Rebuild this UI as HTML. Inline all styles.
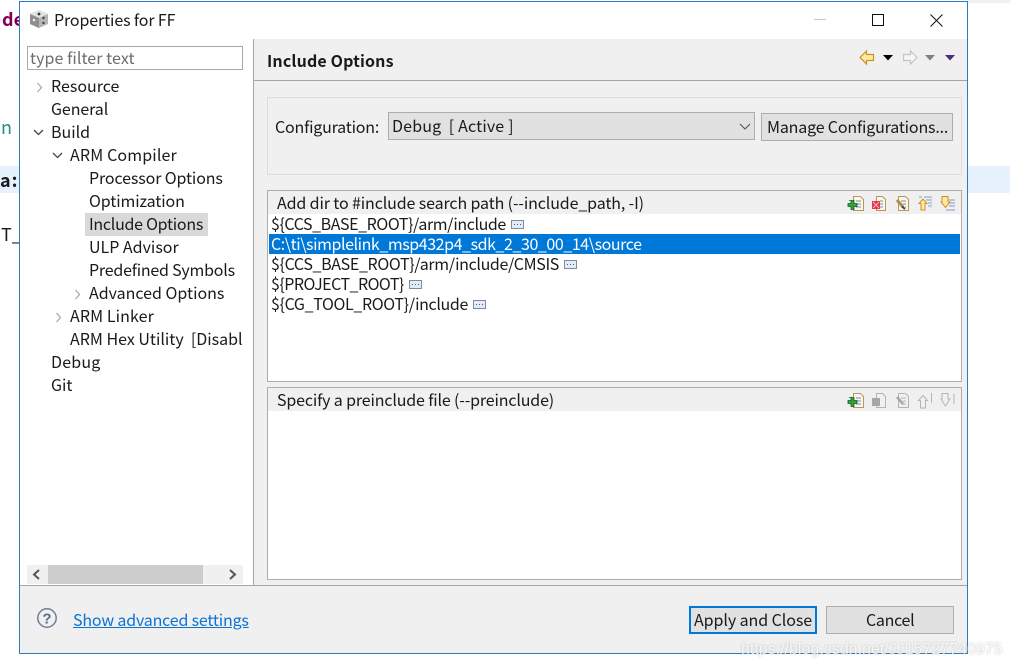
<!DOCTYPE html>
<html><head><meta charset="utf-8">
<style>
html,body{margin:0;padding:0;background:#fff;}
#p{position:relative;width:1010px;height:669px;overflow:hidden;background:#fff;font-family:"Noto Sans CJK SC","Liberation Sans",sans-serif;font-size:16px;color:#1a1a1a;}
#p div{position:absolute;box-sizing:border-box;}
.t{white-space:pre;line-height:22px;height:22px;}
svg{position:absolute;overflow:visible;}
.b{background:#e1e1e1;border:1px solid #adadad;}
.sec{background:#fff;border:1px solid #adadad;}
.hd{background:#f0f0f0;}
.dots{width:13px;height:9px;border:1px solid #7d8ba0;background:#e4ebf6;}
.dots:after{content:"";position:absolute;left:2px;top:3px;width:7px;height:1px;background:repeating-linear-gradient(90deg,#3d5a8a 0 1px,transparent 1px 3px);}
</style></head><body><div id="p">
<!-- background peeks -->
<div style="left:0;top:0;width:19px;height:669px;background:#fff"></div>
<div class="t" style="left:2px;top:8px;font-weight:700;color:#7f0055;font-size:18px">de</div>
<div class="t" style="left:1px;top:116px;color:#2a8a8a;font-size:18px">n</div>
<div style="left:0;top:166px;width:19px;height:27px;background:#e8f2fe"></div>
<div class="t" style="left:0;top:169px;font-weight:700;font-size:18px;letter-spacing:1px">a:</div>
<div class="t" style="left:1px;top:223px;font-size:18px">T_</div>
<div style="left:968px;top:166px;width:42px;height:27px;background:#e8f2fe"></div>
<div style="left:968px;top:0;width:42px;height:3px;background:#f0f0f0"></div>
<!-- dialog -->
<div style="left:19px;top:1px;width:949px;height:653px;background:#fff;border:1px solid #2b7cc4"></div>
<!-- title -->
<svg style="left:29px;top:9px" width="20" height="20" viewBox="0 0 20 20"><path d="M10 1L19 5V15L10 19L1 15V5Z" fill="#b5b5b5"/><path d="M10 1L19 5L10 9L1 5Z" fill="#e2e2e2"/><path d="M1 5L10 9V19L1 15Z" fill="#8f8f8f"/><circle cx="10" cy="5" r="1.4" fill="#333"/><circle cx="5" cy="11" r="1.3" fill="#eee"/><circle cx="14.5" cy="9" r="1.2" fill="#444"/><circle cx="14.5" cy="14" r="1.2" fill="#444"/></svg>
<div class="t" style="left:54px;top:8px;letter-spacing:-.12px">Properties for FF</div>
<div style="left:814px;top:19px;width:12px;height:1px;background:#c8c8c8"></div>
<div style="left:872px;top:14px;width:12px;height:12px;border:1px solid #111"></div>
<svg style="left:930px;top:14px" width="13" height="13"><path d="M0.5 0.5L12.5 12.5M12.5 0.5L0.5 12.5" stroke="#111" stroke-width="1" fill="none"/></svg>
<!-- left panel -->
<div style="left:27px;top:46px;width:216px;height:24px;border:1px solid #a9a9a9;background:#fff"></div>
<div class="t" style="left:30px;top:46px;color:#6d6d6d;letter-spacing:.07px">type filter text</div>
<svg style="left:36px;top:82px" width="7" height="11"><path d="M1.5 1L5.5 5.5L1.5 10" stroke="#aaa" stroke-width="1.3" fill="none"/></svg>
<div class="t" style="left:51px;top:74px">Resource</div>
<div class="t" style="left:51px;top:97px;letter-spacing:-.1px">General</div>
<svg style="left:33px;top:129px" width="12" height="7"><path d="M1 1L5.5 5.5L10 1" stroke="#444" stroke-width="1.3" fill="none"/></svg>
<div class="t" style="left:51px;top:120px">Build</div>
<svg style="left:52px;top:152px" width="12" height="7"><path d="M1 1L5.5 5.5L10 1" stroke="#444" stroke-width="1.3" fill="none"/></svg>
<div class="t" style="left:70px;top:143px;letter-spacing:.15px">ARM Compiler</div>
<div class="t" style="left:89px;top:166px;letter-spacing:-.12px">Processor Options</div>
<div class="t" style="left:89px;top:189px;letter-spacing:-.1px">Optimization</div>
<div style="left:85px;top:213px;width:123px;height:23px;background:#d9d9d9"></div>
<div class="t" style="left:89px;top:212px;letter-spacing:-.27px">Include Options</div>
<div class="t" style="left:89px;top:235px">ULP Advisor</div>
<div class="t" style="left:89px;top:258px;letter-spacing:-.22px">Predefined Symbols</div>
<svg style="left:74px;top:289px" width="7" height="11"><path d="M1.5 1L5.5 5.5L1.5 10" stroke="#aaa" stroke-width="1.3" fill="none"/></svg>
<div class="t" style="left:89px;top:281px">Advanced Options</div>
<svg style="left:55px;top:312px" width="7" height="11"><path d="M1.5 1L5.5 5.5L1.5 10" stroke="#aaa" stroke-width="1.3" fill="none"/></svg>
<div class="t" style="left:70px;top:304px;letter-spacing:.1px">ARM Linker</div>
<div style="left:70px;top:327px;width:173px;height:22px;overflow:hidden"><div class="t" style="left:0;top:0">ARM Hex Utility  [Disabled]</div></div>
<div class="t" style="left:51px;top:350px;letter-spacing:.2px">Debug</div>
<div class="t" style="left:51px;top:373px">Git</div>
<!-- h scroll -->
<div style="left:27px;top:565px;width:216px;height:19px;background:#f0f0f0"></div>
<div style="left:48px;top:565px;width:155px;height:19px;background:#cdcdcd"></div>
<svg style="left:32px;top:569px" width="9" height="11"><path d="M7 1L2 5.5L7 10" stroke="#555" stroke-width="2" fill="none"/></svg>
<svg style="left:228px;top:569px" width="9" height="11"><path d="M2 1L7 5.5L2 10" stroke="#555" stroke-width="2" fill="none"/></svg>
<!-- right panel -->
<div style="left:253px;top:39px;width:714px;height:546px;background:#f0f0f0;border-left:1px solid #a5a5a5"></div>
<div style="left:254px;top:80px;width:713px;height:1px;background:#a5a5a5"></div>
<div class="t" style="left:267px;top:49px;font-weight:700;letter-spacing:.15px">Include Options</div>
<!-- nav icons -->
<svg style="left:859px;top:50px" width="16" height="15"><path d="M7.5 1L1 7.5L7.5 14V10.5H14.5V4.5H7.5Z" fill="#fde9a8" stroke="#d18f1e" stroke-width="1.2"/></svg>
<svg style="left:883px;top:55px" width="10" height="6"><path d="M0 0H10L5 5.5Z" fill="#000"/></svg>
<svg style="left:902px;top:50px" width="16" height="15"><path d="M8.5 1L15 7.5L8.5 14V10.500H1.500V4.500H8.500Z" fill="#f5f5f5" stroke="#c4c4c4" stroke-width="1.2"/></svg>
<svg style="left:925px;top:55px" width="10" height="6"><path d="M0 0H10L5 5.5Z" fill="#808080"/></svg>
<svg style="left:945px;top:55px" width="10" height="6"><path d="M0 0H10L5 5.5Z" fill="#4a2f80"/></svg>
<!-- config group -->
<div style="left:267px;top:97px;width:695px;height:78px;border:1px solid #dcdcdc"></div>
<div class="t" style="left:275px;top:115px;letter-spacing:-.2px">Configuration:</div>
<div class="b" style="left:388px;top:112px;width:367px;height:28px"></div>
<div class="t" style="left:392px;top:114px;letter-spacing:.16px">Debug  [ Active ]</div>
<svg style="left:739px;top:123px" width="12" height="7"><path d="M1 1L6 6L11 1" stroke="#555" stroke-width="1.1" fill="none"/></svg>
<div class="b" style="left:761px;top:113px;width:192px;height:28px"></div>
<div class="t" style="left:767px;top:115px;letter-spacing:-.17px">Manage Configurations...</div>
<!-- include section -->
<div class="sec" style="left:267px;top:190px;width:695px;height:192px"></div>
<div class="hd" style="left:268px;top:191px;width:693px;height:23px"></div>
<div class="t" style="left:277px;top:191px;letter-spacing:-.12px">Add dir to #include search path (--include_path, -I)</div>
<div class="t" style="left:271px;top:212px;letter-spacing:-.43px">${CCS_BASE_ROOT}/arm/include</div>
<div class="dots" style="left:511px;top:220px"></div>
<div style="left:269px;top:234px;width:691px;height:20px;background:#0078d7"></div>
<div class="t" style="left:271px;top:232px;color:#fff;letter-spacing:-.43px">C:\ti\simplelink_msp432p4_sdk_2_30_00_14\source</div>
<div class="t" style="left:271px;top:252px;letter-spacing:-.35px">${CCS_BASE_ROOT}/arm/include/CMSIS</div>
<div class="dots" style="left:564px;top:260px"></div>
<div class="t" style="left:271px;top:272px;letter-spacing:-.52px">${PROJECT_ROOT}</div>
<div class="dots" style="left:409px;top:280px"></div>
<div class="t" style="left:271px;top:292px;letter-spacing:-.35px">${CG_TOOL_ROOT}/include</div>
<div class="dots" style="left:473px;top:300px"></div>
<!-- toolbar 1 : origin 840,185 -->
<svg style="left:840px;top:185px" width="125" height="30" viewBox="0 0 125 30">
<g fill="#fbf7ea" stroke="#b8975a">
<path d="M13.500 11.500H20.500L23.500 14.500V25.500H13.500Z"/>
<path d="M36.500 11.500H42.500L45.500 14.500V25.500H36.500Z"/>
<path d="M58.500 11.500H65.500L68.500 14.500V25.500H58.500Z"/>
</g>
<g stroke="#6d8fb8"><path d="M16 16H21M16 19H21M16 22H21M40 16H43M40 19H43M40 22H43M61 16H66M63 19H66M65 22H66"/></g>
<path d="M9.500 15.500H14.500V18.500H17.500V21.500H14.500V24.500H11.500V21.500H8.500V18.500H11.500V15.500Z" fill="#2fa53a" stroke="#14591e" stroke-width="0.8" transform="translate(-.5 0)"/>
<rect x="32" y="16" width="8" height="8" fill="#e0384a"/><path d="M33 17L39 23M39 17L33 23" stroke="#f7b5bb"/>
<path d="M57 15L63 22" stroke="#b28a4a" stroke-width="3"/><path d="M62 21.500L65 24" stroke="#444" stroke-width="2"/>
<path d="M79 18.500L83 14L87 18.500H85V25H81V18.500Z" fill="#fdeaa6" stroke="#d18f1e"/>
<path d="M79 12H82M84 12H92M86 15H92M88 18H92M88 21H92" stroke="#7f9cc4"/><path d="M91.500 12V23" stroke="#cfd6e2"/>
<path d="M102 17V11.500H108V17H110L105.500 22.500L101 17Z" fill="#fdeaa6" stroke="#d18f1e"/>
<path d="M109 15H115M110 18H115M109 21H115M106 25H115" stroke="#7f9cc4"/>
</svg>
<!-- preinclude section -->
<div class="sec" style="left:267px;top:387px;width:695px;height:193px"></div>
<div class="hd" style="left:268px;top:388px;width:693px;height:23px"></div>
<div class="t" style="left:277px;top:388px;letter-spacing:-.15px">Specify a preinclude file (--preinclude)</div>
<!-- toolbar 2 : origin 840,382 -->
<svg style="left:840px;top:382px" width="125" height="30" viewBox="0 0 125 30">
<path d="M13.500 11.500H20.500L23.500 14.500V25.500H13.500Z" fill="#fbf7ea" stroke="#b8975a"/>
<path d="M16 16H21M16 19H21M16 22H21" stroke="#6d8fb8"/>
<path d="M9.500 15.500H14.500V18.500H17.500V21.500H14.500V24.500H11.500V21.500H8.500V18.500H11.500V15.500Z" fill="#2fa53a" stroke="#14591e" stroke-width="0.8" transform="translate(-.5 0)"/>
<g fill="none" stroke="#b4b4b4">
<path d="M36.500 11.500H42.500L45.500 14.500V25.500H36.500Z"/>
<path d="M58.500 11.500H65.500L68.500 14.500V25.500H58.500Z"/>
<path d="M61 16H66M63 19H66M62 22H66"/>
<path d="M78.500 18.500L83 13.500L87.500 18.500H85.500V26H80.500V18.500Z"/><path d="M91.500 11V21"/>
<path d="M102 17V11.500H108V17H110L105.500 24L101 17Z"/><path d="M114 12V22"/>
</g>
<rect x="32" y="16" width="8" height="8" fill="#a6a6a6"/>
<path d="M57 15L63 22" stroke="#a6a6a6" stroke-width="2.500"/>
</svg>
<!-- footer -->
<div style="left:20px;top:585px;width:947px;height:68px;background:#f0f0f0;border-top:1px solid #a5a5a5"></div>
<svg style="left:37px;top:608px" width="20" height="20"><circle cx="10" cy="10" r="9.200" fill="none" stroke="#6f7f9c" stroke-width="1.500"/><text x="10" y="15.500" font-family="Liberation Sans" font-size="15" font-weight="700" text-anchor="middle" fill="#5d6b85">?</text></svg>
<div class="t" style="left:73px;top:608px;color:#0c73d6;text-decoration:underline;letter-spacing:-.18px">Show advanced settings</div>
<div style="left:689px;top:606px;width:128px;height:28px;background:#e1e1e1;border:2px solid #0078d7"></div>
<div class="t" style="left:694px;top:608px;letter-spacing:-.07px">Apply and Close</div>
<div class="b" style="left:826px;top:606px;width:128px;height:28px"></div>
<div class="t" style="left:866px;top:608px;letter-spacing:-.3px">Cancel</div>
<!-- watermark -->
<div class="t" style="left:741px;top:639px;color:rgba(255,255,255,.8);text-shadow:0 0 2px rgba(120,120,120,.45);font-family:'Liberation Sans',sans-serif;font-size:16px">https://blog.csdn.net/JJ15727740975</div>
</div></body></html>
